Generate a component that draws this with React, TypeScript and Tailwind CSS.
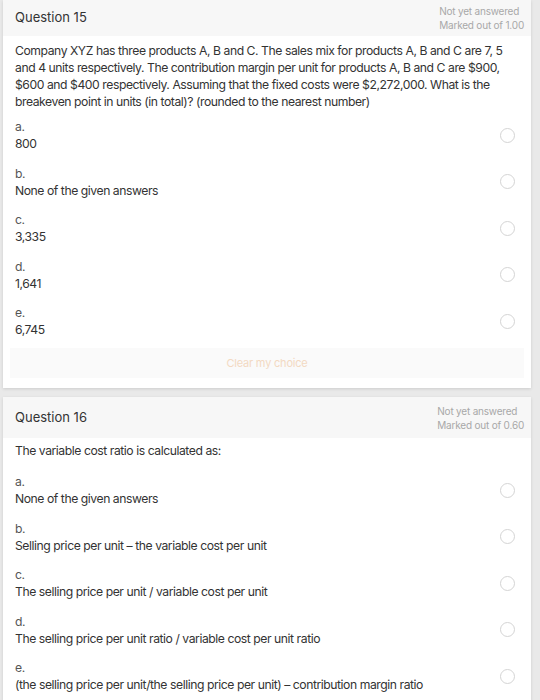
import React from "react";

type Opt = { l: string; v: string };

const q1: Opt[] = [
  { l: "a.", v: "800" },
  { l: "b.", v: "None of the given answers" },
  { l: "c.", v: "3,335" },
  { l: "d.", v: "1,641" },
  { l: "e.", v: "6,745" },
];

const q2: Opt[] = [
  { l: "a.", v: "None of the given answers" },
  { l: "b.", v: "Selling price per unit \u2013 the variable cost per unit" },
  { l: "c.", v: "The selling price per unit / variable cost per unit" },
  { l: "d.", v: "The selling price per unit ratio / variable cost per unit ratio" },
  { l: "e.", v: "(the selling price per unit/the selling price per unit) \u2013 contribution margin ratio" },
];

function Options({ opts }: { opts: Opt[] }) {
  return (
    <div className="flex flex-col gap-[12.5px]">
      {opts.map((o) => (
        <div key={o.l} className="flex items-center justify-between">
          <div className="leading-[17px]">
            <div className="text-[#555]">{o.l}</div>
            <div>{o.v}</div>
          </div>
          <div className="w-[15px] h-[15px] rounded-full border border-[#d4d4d4] mr-[2px]" />
        </div>
      ))}
    </div>
  );
}

function Header({ n, mark, h }: { n: string; mark: string; h: string }) {
  return (
    <div className={`flex items-center justify-between bg-[#f7f7f7] pl-[12px] pr-[7px] ${h}`}>
      <div className="text-[13px] tracking-[0px] text-[#333]">Question {n}</div>
      <div className="text-[10px] leading-[14px] tracking-[-0.2px] text-[#a8a8a8]">
        <div>Not yet answered</div>
        <div>Marked out of {mark}</div>
      </div>
    </div>
  );
}

export default function App() {
  return (
    <div
      className="h-[700px] overflow-hidden bg-[#e9e9e9] pl-[3px] pr-[9px] text-[12.2px] text-[#333] tracking-[-0.45px]"
      style={{ fontFamily: "Inter, 'Liberation Sans', sans-serif" }}
    >
      <div className="bg-white shadow-[0_1px_3px_rgba(0,0,0,0.12)]">
        <Header n="15" mark="1.00" h="h-[36px]" />
        <div className="pl-[12px] pr-[14px] pt-[6px] pb-[10px]">
          <p className="leading-[17px] mb-[8px] pr-[10px]">
            Company XYZ has three products A, B and C. The sales mix for products A, B and C are 7, 5 and 4 units
            respectively. The contribution margin per unit for products A, B and C are $900, $600 and $400
            respectively. Assuming that the fixed costs were $2,272,000. What is the breakeven point in units (in
            total)? (rounded to the nearest number)
          </p>
          <Options opts={q1} />
          <div className="mt-[10px] -ml-[5px] -mr-[7px] h-[30px] bg-[#fafafa] flex items-center justify-center text-[11px] tracking-[-0.2px] text-[#f3d9c2]">
            Clear my choice
          </div>
        </div>
      </div>
      <div className="mt-[9px] bg-white shadow-[0_1px_3px_rgba(0,0,0,0.12)]">
        <Header n="16" mark="0.60" h="h-[41px]" />
        <div className="pl-[12px] pr-[14px] pt-[4px] pb-[10px]">
          <p className="leading-[17px] mb-[14px]">The variable cost ratio is calculated as:</p>
          <Options opts={q2} />
        </div>
      </div>
    </div>
  );
}
